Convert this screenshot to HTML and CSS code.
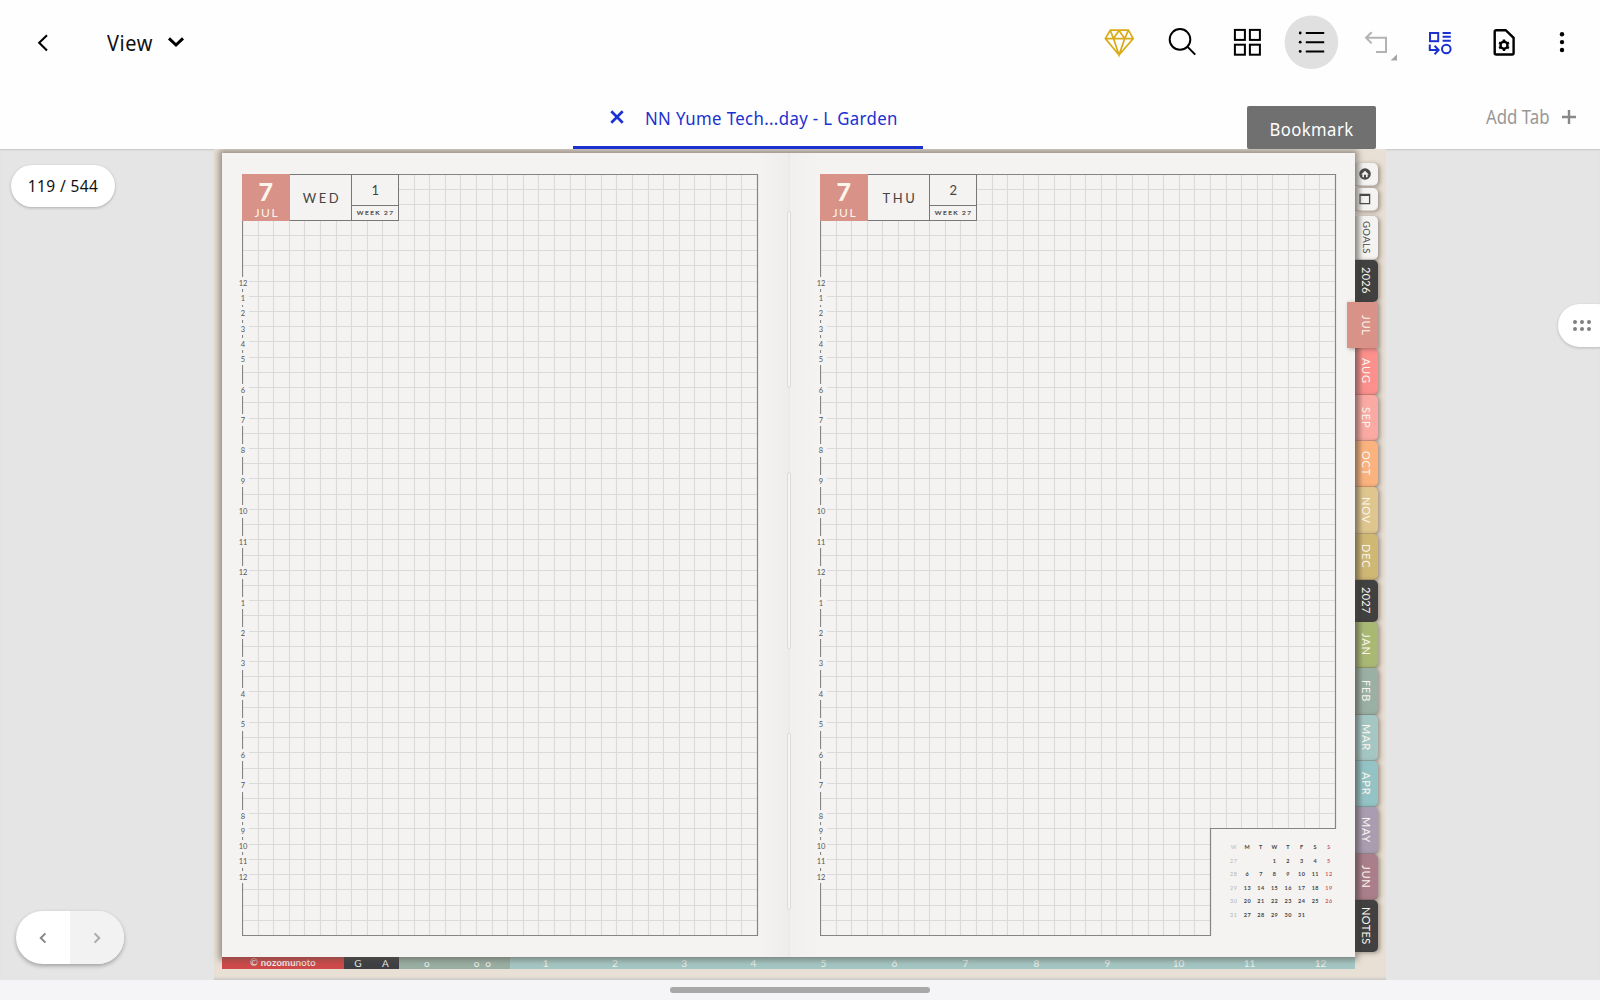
FILE: index.html
```
<!DOCTYPE html>
<html lang="en">
<head>
    <meta charset="UTF-8">
    <meta name="viewport" content="width=device-width, initial-scale=1.0">
    <title>NN Yume Tech - Planner</title>
    <link rel="stylesheet" href="styles.css">
</head>
<body>
    <header class="toolbar">
        <button class="back">
            <svg width="14" height="20" viewBox="0 0 14 20"><path d="M11 2.2 3.2 9.8 11 17.6"/></svg>
        </button>
        <span class="mode">View</span>
        <svg class="mode-arrow" width="18" height="12" viewBox="0 0 18 12"><path d="M2 2.4 9 9 16 2.4"/></svg>

        <div class="tools">
            <svg class="tool gold" viewBox="0 0 54 54"><path d="M18.3 15.2H36.4L41.2 23.6 27 40 13.4 23.6ZM13.4 23.6H41.2M18.3 15.2 21.5 23.6 27 15.6 32.7 23.6 36.4 15.2M21.5 23.6 27 40 32.7 23.6"/></svg>
            <svg class="tool" viewBox="0 0 54 54"><circle cx="24" cy="24.4" r="10.3"/><path d="M31.4 31.6 39.2 39.6"/></svg>
            <svg class="tool" viewBox="0 0 54 54"><rect x="14.9" y="14.9" width="10" height="10"/><rect x="29.9" y="14.9" width="10" height="10"/><rect x="14.9" y="29.7" width="10" height="10"/><rect x="29.9" y="29.7" width="10" height="10"/></svg>
            <svg class="tool" viewBox="0 0 54 54"><circle class="disc" cx="27.4" cy="27.2" r="26.8"/><path d="M21.8 18H40.2M21.8 27.2H40.2M21.8 36.4H40.2"/><g class="dots"><circle cx="16.2" cy="18" r="1.4"/><circle cx="16.2" cy="27.2" r="1.4"/><circle cx="16.2" cy="36.4" r="1.4"/></g></svg>
            <svg class="tool muted" viewBox="0 0 54 54"><path d="M23.7 17.3 18 22.8 23.7 28.4M18 22.8H38V37H28"/><path class="corner" d="M42.6 45.4 49 39.2V45.4Z"/></svg>
            <svg class="tool blue" viewBox="0 0 54 54"><rect x="18" y="18" width="8.2" height="8.2"/><path d="M30.6 17.9H38.8M30.6 21.8H38.8M30.6 25.7H38.8M17.8 29.6V35H26M22.6 30.8 26.6 35 22.6 39.2"/><circle cx="34.3" cy="34" r="4.3"/></svg>
            <svg class="tool file" viewBox="0 0 54 54"><path d="M20.2 15.2H29.7L37.6 22.8V38Q37.6 39.5 36.1 39.5H20.2Q18.7 39.5 18.7 38V16.7Q18.7 15.2 20.2 15.2Z"/><circle cx="28" cy="30.3" r="3.5"/><path class="teeth" d="M28 24.6V27M28 33.6V36M23.1 27.5 25.1 28.6M30.9 32 32.9 33.1M23.1 33.1 25.1 32M30.9 28.6 32.9 27.5"/></svg>
            <svg class="tool more" viewBox="0 0 50 54"><g class="dots"><circle cx="23" cy="19.2" r="2.2"/><circle cx="23" cy="27.1" r="2.2"/><circle cx="23" cy="35" r="2.2"/></g></svg>
        </div>
    </header>

    <nav class="tabs">
        <div class="tab">
            <svg width="14" height="14" viewBox="0 0 14 14"><path d="M1.3 1.3 12.7 12.7M12.7 1.3 1.3 12.7"/></svg>
            <span>NN Yume Tech...day - L Garden</span>
        </div>
        <div class="add-tab">
            <span>Add Tab</span>
            <svg width="14" height="14" viewBox="0 0 14 14"><path d="M7 0V14M0 7H14"/></svg>
        </div>
        <div class="tooltip"><span>Bookmark</span></div>
    </nav>

    <main class="canvas">
        <div class="page-count">119 / 544</div>

        <div class="desk">
            <div class="book">
                <section class="frame">
                    <svg class="grid" width="517" height="762"><path class="lines"/><path class="outline" d="M.5 .5H515.5V761.5H.5Z"/></svg>
                    <div class="day-head">
                        <div class="date"><b>7</b><span>JUL</span></div>
                        <div class="weekday">WED</div>
                        <div class="week"><span>1</span><small>WEEK 27</small></div>
                    </div>
                    <div class="hours"></div>
                </section>

                <div class="spine"><i></i><i></i><i></i></div>

                <section class="frame">
                    <svg class="grid" width="517" height="762"><path class="lines"/><path class="outline" d="M.5 .5H515.5V654.5H390.5V761.5H.5Z"/></svg>
                    <div class="day-head">
                        <div class="date"><b>7</b><span>JUL</span></div>
                        <div class="weekday">THU</div>
                        <div class="week"><span>2</span><small>WEEK 27</small></div>
                    </div>
                    <div class="hours"></div>
                    <div class="mini-cal"></div>
                </section>
            </div>

            <aside class="side-tabs">
                <div class="side icon"><svg width="12" height="12" viewBox="0 0 12 12"><circle class="badge" cx="6" cy="6" r="5.8"/><path class="house" d="M2.2 6.4 6 2.8 9.8 6.4H8.6V9.2H7V6.8H5V9.2H3.4V6.4Z"/></svg></div>
                <div class="side icon square"><svg width="12" height="12" viewBox="0 0 12 12"><path d="M1 1.5H10.6V10.6H1ZM1 2.4H10.6"/></svg></div>
                <div class="side goals"><span>GOALS</span></div>
                <div class="side year"><span>2026</span></div>
                <div class="side jul"><span>JUL</span></div>
                <div class="side aug"><span>AUG</span></div>
                <div class="side sep"><span>SEP</span></div>
                <div class="side oct"><span>OCT</span></div>
                <div class="side nov"><span>NOV</span></div>
                <div class="side dec"><span>DEC</span></div>
                <div class="side year"><span>2027</span></div>
                <div class="side jan"><span>JAN</span></div>
                <div class="side feb"><span>FEB</span></div>
                <div class="side mar"><span>MAR</span></div>
                <div class="side apr"><span>APR</span></div>
                <div class="side may"><span>MAY</span></div>
                <div class="side jun"><span>JUN</span></div>
                <div class="side notes"><span>NOTES</span></div>
            </aside>

            <div class="bottom-strip">
                <div class="brand">©&nbsp;<b>nozomu</b>noto</div>
                <div class="ga"><span>G</span><span>A</span></div>
                <div class="rings"><span>o</span><span>o</span><span>o</span></div>
                <div class="nums first"><span>1</span><span>2</span><span>3</span><span>4</span></div>
                <div class="nums"><span>5</span><span>6</span><span>7</span><span>8</span><span>9</span><span>10</span><span>11</span><span>12</span></div>
            </div>
        </div>

        <div class="handle">
            <i></i><i></i><i></i><i></i><i></i><i></i>
        </div>

        <div class="pager">
            <span><svg width="8" height="12" viewBox="0 0 8 12"><path d="M6.4 1.4 1.8 6 6.4 10.6"/></svg></span>
            <span class="next"><svg width="8" height="12" viewBox="0 0 8 12"><path d="M1.6 1.4 6.2 6 1.6 10.6"/></svg></span>
        </div>
    </main>

    <footer class="nav-bar"><div class="pill"></div></footer>

    <script src="script.js"></script>
</body>
</html>
```
FILE: styles.css
```
* {
    margin: 0;
    padding: 0;
    box-sizing: border-box;
}

body {
    width: 1600px;
    height: 1000px;
    display: flex;
    flex-direction: column;
    overflow: hidden;
    background-color: #fefefe;
    font-family: "Noto Sans", "Open Sans", sans-serif;
    color: #111;
}

svg {
    display: block;
    fill: none;
    flex-shrink: 0;
}

/* toolbar */
.toolbar {
    height: 84px;
    display: flex;
    align-items: center;
    padding-left: 36px;
}

.back {
    border: none;
    background: none;
    margin-top: 1px;
}

.back svg {
    stroke: #000;
    stroke-width: 2.1;
}

.mode {
    margin: 2px 0 0 57px;
    width: 46px;
    font-size: 21px;
    letter-spacing: 0.6px;
    transform: scaleX(0.95);
    transform-origin: left;
}

.mode-arrow {
    margin-left: 14px;
    stroke: #000;
    stroke-width: 3;
}

.tools {
    display: flex;
    margin-left: auto;
    padding-right: 11px;
}

.tool {
    width: 54px;
    height: 54px;
    margin: 0 5px;
    overflow: visible;
    stroke: #000;
    stroke-width: 2;
}

.tool.more {
    margin: 0 0 0 4px;
    width: 50px;
}

.tool .disc {
    fill: #e0e0e0;
    stroke: none;
}

.tool .dots {
    fill: #000;
    stroke: none;
}

.tool.gold {
    stroke: #d9ab18;
    stroke-width: 1.7;
}

.tool.muted {
    stroke: #b3b3b3;
}

.tool .corner {
    fill: #a6a6a6;
    stroke: none;
}

.tool.blue {
    stroke: #1b31d0;
}

.tool.file {
    stroke-width: 2.4;
}

.tool .teeth {
    stroke-width: 2.4;
}

/* document tabs */
.tabs {
    position: relative;
    height: 65px;
    display: flex;
    align-items: flex-end;
    padding-left: 573px;
}

.tab {
    width: 350px;
    height: 56px;
    padding: 0 0 5px 37px;
    display: flex;
    align-items: center;
    border-bottom: 3px solid #1b31d0;
    color: #1b31d0;
    font-size: 18.5px;
    letter-spacing: 0.4px;
    white-space: nowrap;
}

.tab svg {
    margin-right: 21px;
    stroke: #1b31d0;
    stroke-width: 2.7;
}

.tab span {
    transform: scaleX(0.907);
    transform-origin: left;
}

.add-tab {
    height: 56px;
    margin-left: auto;
    padding: 0 24px 8px 0;
    display: flex;
    align-items: center;
    gap: 13px;
    font-size: 19px;
    color: #989898;
}

.add-tab span {
    width: 63px;
    white-space: nowrap;
    transform: scaleX(0.885);
    transform-origin: left;
}

.add-tab svg {
    stroke: #888;
    stroke-width: 2.4;
}

.tooltip {
    position: absolute;
    left: 1247px;
    top: 22px;
    width: 129px;
    height: 43px;
    border-radius: 2px;
    background-color: #707070;
    color: #fff;
    font-size: 18.5px;
    letter-spacing: 0.5px;
    line-height: 45px;
    text-align: center;
    z-index: 5;
}

.tooltip span {
    display: block;
    transform: scaleX(0.9);
}

/* canvas */
.canvas {
    position: relative;
    height: 831px;
    background-color: #e5e5e5;
    box-shadow: inset 0 2px 2px -1px #c4c4c4;
    overflow: hidden;
    padding-left: 214px;
}

.desk {
    width: 1172px;
    height: 831px;
    padding: 4px 0 0 8px;
    display: grid;
    grid-template-columns: 1133px 31px;
    grid-template-rows: 804px 12px;
    background-color: #e8dfd5;
    box-shadow: inset 0 -3px 2px -1px #cfccc8;
}

.book {
    position: relative;
    z-index: 1;
    display: flex;
    padding: 21px 19px 0 20px;
    background-color: #f4f3f1;
    box-shadow: 0 0 6px 3px rgba(90, 80, 72, 0.55);
}

.frame {
    position: relative;
    width: 516px;
    height: 762px;
    display: flex;
    flex-direction: column;
}

.grid {
    position: absolute;
    left: 0;
    top: 0;
}

.lines {
    stroke: #dadad8;
    stroke-width: 1.1;
}

.outline {
    stroke: #858585;
    stroke-width: 1.2;
}

.day-head {
    position: relative;
    width: 157px;
    height: 47px;
    display: flex;
    background-color: #f4f3f1;
    border: 1px solid #777;
    font-family: Lato, sans-serif;
    color: #444;
}

.date {
    width: 48px;
    height: 47px;
    margin: -1px 0 0 -1px;
    background-color: #d99287;
    color: #fbf5ec;
    display: flex;
    flex-direction: column;
    align-items: center;
}

.date b {
    margin-top: 4px;
    font-size: 25px;
    font-weight: 900;
    line-height: 27px;
}

.date span {
    margin: 1px 0 0 2px;
    font-size: 12px;
    line-height: 13px;
    letter-spacing: 1.6px;
}

.weekday {
    width: 62px;
    line-height: 46px;
    padding-left: 3px;
    text-align: center;
    font-size: 13px;
    letter-spacing: 2.6px;
}

.week {
    width: 47px;
    border-left: 1px solid #777;
    text-align: center;
}

.week span {
    display: block;
    height: 31px;
    border-bottom: 1px solid #777;
    font-size: 13px;
    line-height: 30px;
}

.week small {
    display: block;
    padding-left: 1px;
    font-size: 6.5px;
    line-height: 14px;
    letter-spacing: 1.4px;
    white-space: nowrap;
    -webkit-text-stroke: 0.2px #444;
}

.hours {
    position: relative;
    width: 12px;
    margin: 56px 0 0 -5px;
    font-family: Lato, sans-serif;
    color: #555;
}

.hours div {
    height: 15.22px;
}

.hours .tall {
    height: 30.44px;
}

.hours span {
    display: block;
    height: 12.4px;
    background-color: #f4f3f1;
    font-size: 7.5px;
    line-height: 13px;
    text-align: center;
}

.mini-cal {
    position: absolute;
    right: 0;
    bottom: 0;
    width: 109px;
    height: 100px;
    display: grid;
    grid-template-columns: repeat(8, 13.6px);
    grid-auto-rows: 13.6px;
    padding: 5px 0 0 0;
    font-family: Lato, sans-serif;
    font-size: 5.5px;
    font-weight: bold;
    line-height: 13.6px;
    text-align: center;
    letter-spacing: 0.5px;
    color: #444;
}

.mini-cal .wk {
    color: #b5b5b5;
    font-weight: normal;
}

.mini-cal .sun {
    color: #cf5f66;
}

.spine {
    width: 62px;
    height: 804px;
    margin-top: -21px;
    padding-top: 58px;
    display: flex;
    flex-direction: column;
    align-items: center;
    gap: 84px;
    background: linear-gradient(to right, #f4f3f1, #eeedeb 49%, #e4e3e1 50%, #f1f0ee 52%, #f4f3f1);
}

.spine i {
    width: 4px;
    height: 177px;
    border: 1px solid #dcdbd9;
    border-radius: 2px;
    background-color: #f6f5f3;
}

/* tabs at the right edge of the planner */
.side-tabs {
    padding-top: 10px;
    font-family: Lato, sans-serif;
    font-size: 11px;
    letter-spacing: 0.8px;
    color: #fbf6ee;
}

.side {
    position: relative;
    width: 23px;
    height: 46.35px;
    display: flex;
    align-items: center;
    justify-content: center;
    border-radius: 0 5px 5px 0;
    border-bottom: 1px solid rgba(60, 50, 40, 0.18);
    background-image: linear-gradient(to right, rgba(0, 0, 0, 0.22), rgba(0, 0, 0, 0) 35%);
    box-shadow: 2px 1px 4px rgba(80, 65, 55, 0.5);
}

.side span {
    writing-mode: vertical-rl;
    line-height: 23px;
}

.side.icon {
    height: 23px;
    margin-bottom: 2px;
    padding-right: 3px;
    background-color: #f4f3f1;
}

.side.icon svg {
    stroke: #4a4a4a;
    stroke-width: 1.3;
}

.side.icon .badge {
    fill: #4a4a4a;
    stroke: none;
}

.side.icon .house {
    fill: #f4f3f1;
    stroke: none;
}

.side.square {
    margin-bottom: 5px;
}

.side.goals {
    height: 44px;
    background-color: #f4f3f1;
    color: #4a4a4a;
    font-size: 9.5px;
    letter-spacing: 0.4px;
}

.side.year {
    height: 42px;
    background-color: #414141;
    letter-spacing: 0.3px;
}

.side.jul {
    z-index: 2;
    width: 31px;
    height: 46.4px;
    margin-left: -8px;
    padding-left: 8px;
    border: none;
    border-radius: 0;
    background: #d99287;
}

.aug { background-color: #fb908d; }
.sep { background-color: #faa9a3; }
.oct { background-color: #fab27e; }
.nov { background-color: #dfc68f; }
.dec { background-color: #cfb774; }
.jan { background-color: #a9b974; }
.feb { background-color: #9bb0a5; }
.mar { background-color: #a5c7c4; }
.apr { background-color: #93c3c5; }
.may { background-color: #aa9db2; }
.jun { background-color: #aa7e8b; }

.side.notes {
    height: 52px;
    background-color: #414141;
    letter-spacing: 0.4px;
}

.bottom-strip {
    display: flex;
    font-family: Lato, sans-serif;
    font-size: 10px;
    line-height: 12px;
    color: #f0f2ee;
}

.bottom-strip > div {
    display: flex;
    text-align: center;
}

.bottom-strip .brand {
    width: 122px;
    justify-content: center;
    background-color: #cf4a4a;
    font-size: 9.5px;
    letter-spacing: 0.2px;
}

.bottom-strip .ga {
    width: 55px;
    justify-content: space-around;
    background-color: #3f4044;
}

.bottom-strip .rings {
    width: 111px;
    padding-left: 25px;
    background-color: #9bb0a5;
}

.rings span:nth-child(2) {
    margin: 0 6px 0 44px;
}

.bottom-strip .nums {
    width: 568px;
    background-color: #a5c7c4;
}

.bottom-strip .first {
    width: 277px;
}

.nums span {
    flex: 1;
    padding-left: 2px;
}

/* floating controls */
.page-count {
    position: absolute;
    left: 11px;
    top: 16px;
    width: 104px;
    height: 42px;
    border-radius: 21px;
    background-color: #fff;
    box-shadow: 0 1px 3px rgba(0, 0, 0, 0.25);
    font-size: 15.5px;
    letter-spacing: 0.4px;
    line-height: 43px;
    text-align: center;
}

.handle {
    position: absolute;
    left: 1558px;
    top: 155px;
    width: 60px;
    height: 43px;
    padding: 16px 0 0 15px;
    display: grid;
    grid-template-columns: repeat(3, 4px);
    grid-auto-rows: 4px;
    gap: 3px;
    border-radius: 22px;
    background-color: #fff;
    box-shadow: 0 1px 3px rgba(0, 0, 0, 0.2);
}

.handle i {
    border-radius: 50%;
    background-color: #808080;
}

.pager {
    position: absolute;
    left: 16px;
    top: 762px;
    width: 108px;
    height: 53px;
    display: flex;
    border-radius: 27px;
    overflow: hidden;
    background-color: #fff;
    box-shadow: 0 2px 4px rgba(0, 0, 0, 0.3);
}

.pager span {
    width: 54px;
    display: flex;
    align-items: center;
    justify-content: center;
}

.pager .next {
    background-color: #f2f2f2;
}

.pager svg {
    stroke: #888;
    stroke-width: 2;
}

.pager .next svg {
    stroke: #aaa;
}

.nav-bar {
    height: 20px;
    padding-top: 7px;
    background-color: #f5f5f8;
}

.pill {
    width: 260px;
    height: 6px;
    margin: 0 auto;
    border-radius: 3px;
    background-color: #a8a8a8;
}
```
FILE: script.js
```
const COL = 15.6;
const ROW = 15.22;

// grid lines, the second page stops above the small calendar
document.querySelectorAll('.lines').forEach((path, page) => {
    let d = '';
    for (let i = 1; i < 33; i++) {
        const x = Math.round(i * COL) + 0.5;
        d += `M${x} 1V${page === 1 && i >= 25 ? 654 : 761}`;
    }
    for (let i = 1; i < 50; i++) {
        const y = Math.round(i * ROW) + 0.5;
        d += `M1 ${y}H${page === 1 && i >= 43 ? 390 : 515}`;
    }
    path.setAttribute('d', d);
});

// hour labels, office hours take two rows each
const hours = [12, 1, 2, 3, 4, 5, 6, 7, 8, 9, 10, 11, 12, 1, 2, 3, 4, 5, 6, 7, 8, 9, 10, 11, 12];
document.querySelectorAll('.hours').forEach(list => {
    list.innerHTML = hours.map((h, i) =>
        `<div class="${i >= 5 && i < 20 ? 'tall' : ''}"><span>${h}</span></div>`).join('');
});

const weeks = [
    ['W', 'M', 'T', 'W', 'T', 'F', 'S', 'S'],
    [27, '', '', 1, 2, 3, 4, 5],
    [28, 6, 7, 8, 9, 10, 11, 12],
    [29, 13, 14, 15, 16, 17, 18, 19],
    [30, 20, 21, 22, 23, 24, 25, 26],
    [31, 27, 28, 29, 30, 31, '', '']
];
document.querySelector('.mini-cal').innerHTML = weeks.flat().map((v, i) =>
    `<span class="${i % 8 === 0 ? 'wk' : i % 8 === 7 ? 'sun' : ''}">${v}</span>`).join('');
```
